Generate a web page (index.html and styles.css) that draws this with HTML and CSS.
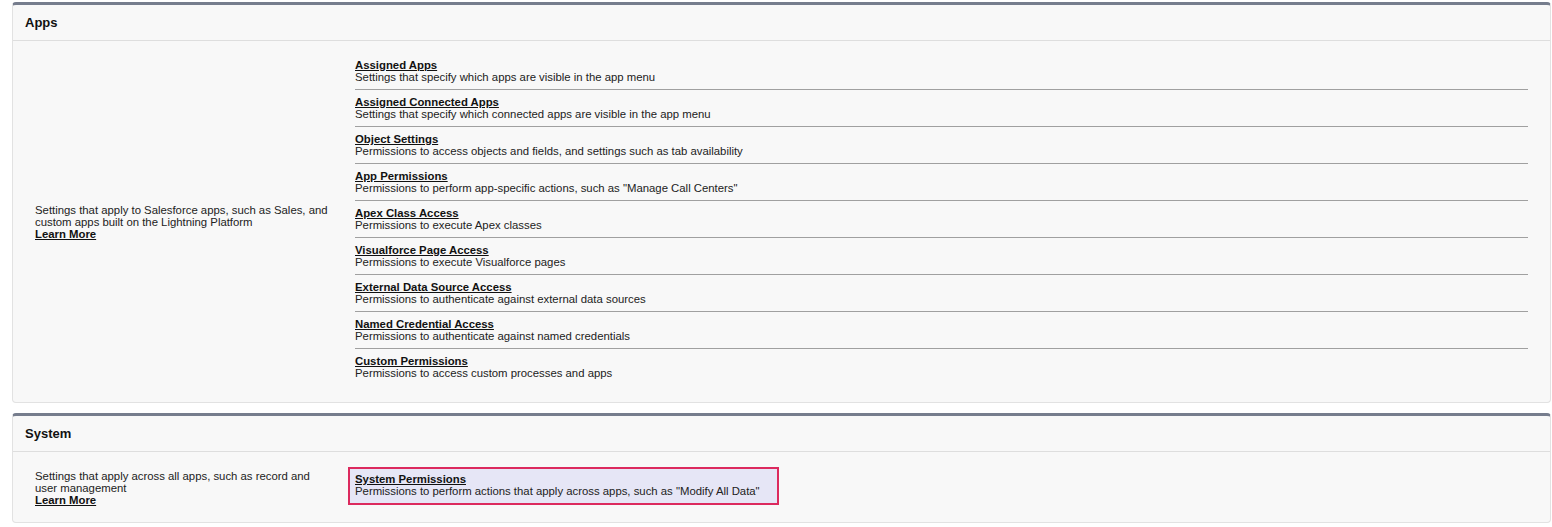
FILE: index.html
```html
<!DOCTYPE html>
<html lang="en">
<head>
<meta charset="utf-8">
<title>Permission Set Overview</title>
<link rel="stylesheet" href="styles.css">
</head>
<body>
<div class="page">
  <section class="panel">
    <h2 class="panel-header">Apps</h2>
    <div class="panel-body panel-body-apps">
      <div class="panel-desc">
        Settings that apply to Salesforce apps, such as Sales, and custom apps built on the Lightning Platform<br>
        <a href="#" class="learn">Learn More</a>
      </div>
      <ul class="items">
        <li class="item"><a href="#" class="item-title">Assigned Apps</a><div class="item-desc">Settings that specify which apps are visible in the app menu</div></li>
        <li class="item"><a href="#" class="item-title">Assigned Connected Apps</a><div class="item-desc">Settings that specify which connected apps are visible in the app menu</div></li>
        <li class="item"><a href="#" class="item-title">Object Settings</a><div class="item-desc">Permissions to access objects and fields, and settings such as tab availability</div></li>
        <li class="item"><a href="#" class="item-title">App Permissions</a><div class="item-desc">Permissions to perform app-specific actions, such as "Manage Call Centers"</div></li>
        <li class="item"><a href="#" class="item-title">Apex Class Access</a><div class="item-desc">Permissions to execute Apex classes</div></li>
        <li class="item"><a href="#" class="item-title">Visualforce Page Access</a><div class="item-desc">Permissions to execute Visualforce pages</div></li>
        <li class="item"><a href="#" class="item-title">External Data Source Access</a><div class="item-desc">Permissions to authenticate against external data sources</div></li>
        <li class="item"><a href="#" class="item-title">Named Credential Access</a><div class="item-desc">Permissions to authenticate against named credentials</div></li>
        <li class="item"><a href="#" class="item-title">Custom Permissions</a><div class="item-desc">Permissions to access custom processes and apps</div></li>
      </ul>
    </div>
  </section>

  <section class="panel">
    <h2 class="panel-header">System</h2>
    <div class="panel-body">
      <div class="panel-desc">
        Settings that apply across all apps, such as record and user management<br>
        <a href="#" class="learn">Learn More</a>
      </div>
      <div class="items">
        <div class="highlight"><a href="#" class="item-title">System Permissions</a><div class="item-desc">Permissions to perform actions that apply across apps, such as "Modify All Data"</div></div>
      </div>
    </div>
  </section>
</div>
</body>
</html>
```

FILE: styles.css
```css
html, body {
  margin: 0;
  padding: 0;
  background: #ffffff;
}

body {
  font-family: "Liberation Sans", Arial, sans-serif;
  font-size: 11.35px;
  line-height: 12px;
  color: #222222;
}

.page {
  padding: 2px 1px 0 12px;
  display: flex;
  flex-direction: column;
  gap: 10px;
}

.panel {
  background: #f8f8f8;
  border: 1px solid #e2e2e2;
  border-top: 3px solid #767d8d;
  border-radius: 4px;
}

.panel-header {
  margin: 0;
  height: 35px;
  display: flex;
  align-items: center;
  padding: 0 12px;
  font-size: 13px;
  font-weight: bold;
  color: #111111;
  border-bottom: 1px solid #dedede;
}

.panel-body {
  display: flex;
  align-items: center;
  gap: 20px;
  padding: 12px 22px 16px 22px;
}

.panel-body-apps {
  padding-bottom: 17px;
}

.panel-desc {
  width: 300px;
  flex: none;
  padding-top: 6px;
  color: #222222;
}

.learn {
  color: #111111;
  font-weight: bold;
  text-decoration: underline;
}

.items {
  flex: 1;
  list-style: none;
  margin: 0;
  padding: 0;
}

.item {
  padding: 6px 0;
  border-bottom: 1px solid #a0a0a0;
}

.item:last-child {
  border-bottom: none;
}

.item-title {
  color: #111111;
  font-weight: bold;
  text-decoration: underline;
}

.item-desc {
  color: #222222;
}

.highlight {
  display: inline-block;
  margin: 3px 0 1px -7px;
  padding: 4px 17px 6px 5px;
  background: #e6e6f6;
  border: 2px solid #dc2a5e;
}
```
